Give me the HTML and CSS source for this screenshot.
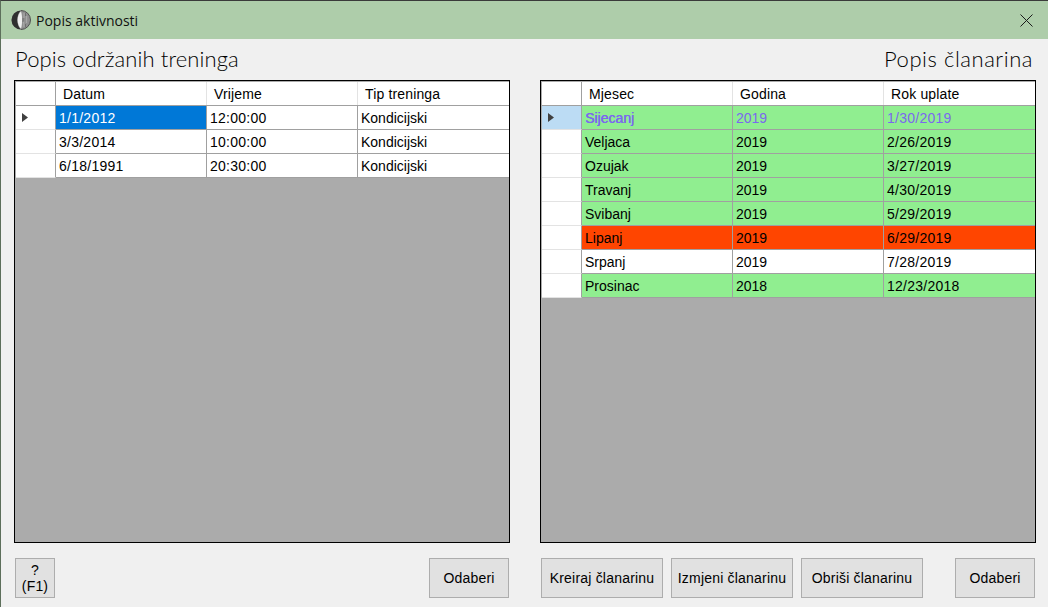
FILE: index.html
```html
<!DOCTYPE html>
<html lang="hr">
<head>
    <meta charset="UTF-8">
    <meta name="viewport" content="width=device-width, initial-scale=1.0">
    <title>Popis aktivnosti</title>
    <link rel="stylesheet" href="styles.css">
</head>
<body>
    <div class="window">
        <!-- Title bar -->
        <div class="titlebar">
            <svg class="app-icon" width="20" height="20" viewBox="0 0 20 20">
                <circle cx="10" cy="10" r="9.500" fill="#8f8f8f"/>
                <path d="M10 0.500 A9.500 9.500 0 0 0 10 19.500 C5 16 5 4 10 0.500 Z" fill="#2f2f2f"/>
                <path d="M10 1.500 C5.500 5 5.500 15 10 18.500 C11.500 14 11.500 6 10 1.500 Z" fill="#efefef"/>
                <path d="M13 3 L13 8 M15.500 6 L15.500 13 M12.500 11 L13 17" stroke="#a8a8a8" stroke-width="1.200" fill="none"/>
                <path d="M14.500 3 L14.500 6 M12 8 L12 12 M14.500 14 L14.500 17" stroke="#6f6f6f" stroke-width="1" fill="none"/>
                <path d="M10 0.500 A9.500 9.500 0 0 1 10 19.500" stroke="#505050" stroke-width="1" fill="none"/>
            </svg>
            <span class="titlebar-text">Popis aktivnosti</span>
            <svg class="close-icon" width="13" height="13" viewBox="0 0 13 13">
                <path d="M0.500 0.500 L12.500 12.500 M12.500 0.500 L0.500 12.500" stroke="#1a1a1a" stroke-width="1" fill="none"/>
            </svg>
        </div>

        <div class="content">
            <!-- Left panel: trainings -->
            <div class="panel">
                <h1 class="panel-title">Popis održanih treninga</h1>
                <div class="grid">
                    <div class="row row-head">
                        <div class="row-header"></div>
                        <div class="cell">Datum</div>
                        <div class="cell">Vrijeme</div>
                        <div class="cell">Tip treninga</div>
                    </div>
                    <div class="row">
                        <div class="row-header">
                            <svg class="row-arrow" width="6" height="9" viewBox="0 0 6 9"><polygon points="0,0 6,4.500 0,9" fill="#404040"/></svg>
                        </div>
                        <div class="cell cell-num cell-selected">1/1/2012</div>
                        <div class="cell cell-num">12:00:00</div>
                        <div class="cell">Kondicijski</div>
                    </div>
                    <div class="row">
                        <div class="row-header"></div>
                        <div class="cell cell-num">3/3/2014</div>
                        <div class="cell cell-num">10:00:00</div>
                        <div class="cell">Kondicijski</div>
                    </div>
                    <div class="row">
                        <div class="row-header"></div>
                        <div class="cell cell-num">6/18/1991</div>
                        <div class="cell cell-num">20:30:00</div>
                        <div class="cell">Kondicijski</div>
                    </div>
                </div>
                <div class="buttons">
                    <button class="btn btn-help">?<br>(F1)</button>
                    <button class="btn btn-choose">Odaberi</button>
                </div>
            </div>

            <!-- Right panel: memberships -->
            <div class="panel">
                <h1 class="panel-title panel-title-right">Popis članarina</h1>
                <div class="grid">
                    <div class="row row-head">
                        <div class="row-header"></div>
                        <div class="cell">Mjesec</div>
                        <div class="cell">Godina</div>
                        <div class="cell">Rok uplate</div>
                    </div>
                    <div class="row row-paid row-current">
                        <div class="row-header">
                            <svg class="row-arrow" width="6" height="9" viewBox="0 0 6 9"><polygon points="0,0 6,4.500 0,9" fill="#404040"/></svg>
                        </div>
                        <div class="cell cell-month">Sijecanj</div>
                        <div class="cell">2019</div>
                        <div class="cell cell-num">1/30/2019</div>
                    </div>
                    <div class="row row-paid">
                        <div class="row-header"></div>
                        <div class="cell">Veljaca</div>
                        <div class="cell">2019</div>
                        <div class="cell cell-num">2/26/2019</div>
                    </div>
                    <div class="row row-paid">
                        <div class="row-header"></div>
                        <div class="cell">Ozujak</div>
                        <div class="cell">2019</div>
                        <div class="cell cell-num">3/27/2019</div>
                    </div>
                    <div class="row row-paid">
                        <div class="row-header"></div>
                        <div class="cell">Travanj</div>
                        <div class="cell">2019</div>
                        <div class="cell cell-num">4/30/2019</div>
                    </div>
                    <div class="row row-paid">
                        <div class="row-header"></div>
                        <div class="cell">Svibanj</div>
                        <div class="cell">2019</div>
                        <div class="cell cell-num">5/29/2019</div>
                    </div>
                    <div class="row row-late">
                        <div class="row-header"></div>
                        <div class="cell">Lipanj</div>
                        <div class="cell">2019</div>
                        <div class="cell cell-num">6/29/2019</div>
                    </div>
                    <div class="row">
                        <div class="row-header"></div>
                        <div class="cell">Srpanj</div>
                        <div class="cell">2019</div>
                        <div class="cell cell-num">7/28/2019</div>
                    </div>
                    <div class="row row-paid">
                        <div class="row-header"></div>
                        <div class="cell">Prosinac</div>
                        <div class="cell">2018</div>
                        <div class="cell cell-num">12/23/2018</div>
                    </div>
                </div>
                <div class="buttons buttons-right">
                    <button class="btn btn-wide">Kreiraj članarinu</button>
                    <button class="btn btn-wide">Izmjeni članarinu</button>
                    <button class="btn btn-wide">Obriši članarinu</button>
                    <button class="btn btn-choose">Odaberi</button>
                </div>
            </div>
        </div>
    </div>
</body>
</html>
```

FILE: styles.css
```css
body {
    margin: 0;
    font-family: "Liberation Sans", Arial, sans-serif;
    font-size: 14px;
    color: #000;
    background-color: #f0f0f0;
    overflow: hidden;
}

.window {
    height: 607px;
    box-sizing: border-box;
    border-top: 1px solid #3a3a3a;
    border-left: 1px solid #5d6f5b;
    background-color: #f0f0f0;
}

.titlebar {
    display: flex;
    align-items: center;
    height: 38px;
    padding: 0 15px 0 10px;
    background-color: #aecdaa;
}

.app-icon {
    margin-right: 5px;
}

.titlebar-text {
    flex: 1;
    font-family: "Open Sans", sans-serif;
    font-size: 14px;
    color: #111;
}

.content {
    display: flex;
    gap: 30px;
    padding-left: 13px;
}

.panel {
    width: 496px;
}

.panel-title {
    height: 41px;
    margin: 0;
    padding: 0 3px 0 1px;
    font-family: Lato, sans-serif;
    font-size: 22px;
    font-weight: 300;
    line-height: 39px;
    letter-spacing: 0.1px;
    color: #000;
}

.panel-title-right {
    text-align: right;
    letter-spacing: 0.55px;
}

.grid {
    height: 463px;
    box-sizing: border-box;
    padding: 1px 0 0 1px;
    border: 1px solid #000;
    background-color: #ababab;
}

.row {
    display: grid;
    grid-template-columns: 40px 151px 151px 1fr;
    grid-template-rows: 23px;
    height: 24px;
    box-sizing: border-box;
    border-bottom: 1px solid #a0a0a0;
    background-color: #fff;
}

.row-header {
    display: flex;
    align-items: center;
    padding-left: 6px;
    margin-bottom: -1px;
    border-right: 1px solid #a0a0a0;
    border-bottom: 1px solid #e3e3e3;
    background-color: #fff;
}

.row-head .row-header {
    border-bottom-color: #a0a0a0;
}

.cell {
    padding-left: 3px;
    border-right: 1px solid #a0a0a0;
    line-height: 24px;
    white-space: nowrap;
}

.cell:last-child {
    border-right: none;
}

.cell-num {
    letter-spacing: 0.25px;
}

.row-head .cell {
    padding-left: 7px;
    border-right-color: #e3e3e3;
    letter-spacing: 0.15px;
}

.cell-selected {
    background-color: #0078d7;
    color: #fff;
}

.row-paid {
    background-color: #90ee90;
}

.row-late {
    background-color: #ff4500;
}

.row-current .row-header {
    background-color: #bcdcf4;
}

.row-current .cell {
    color: #7b68ee;
}

.cell-month {
    text-shadow: 0.4px 0 0 #7b68ee;
}

.buttons {
    display: flex;
    justify-content: space-between;
    margin-top: 15px;
    padding: 0 1px;
}

.buttons-right {
    justify-content: flex-start;
    gap: 8px;
}

.buttons-right .btn-choose {
    margin-left: auto;
}

.btn {
    height: 40px;
    box-sizing: border-box;
    padding: 0;
    border: 1px solid #adadad;
    background-color: #e1e1e1;
    font-family: "Liberation Sans", Arial, sans-serif;
    font-size: 14px;
    letter-spacing: 0.2px;
    color: #000;
}

.btn-help {
    width: 40px;
}

.btn-choose {
    width: 80px;
}

.btn-wide {
    width: 122px;
}
```
